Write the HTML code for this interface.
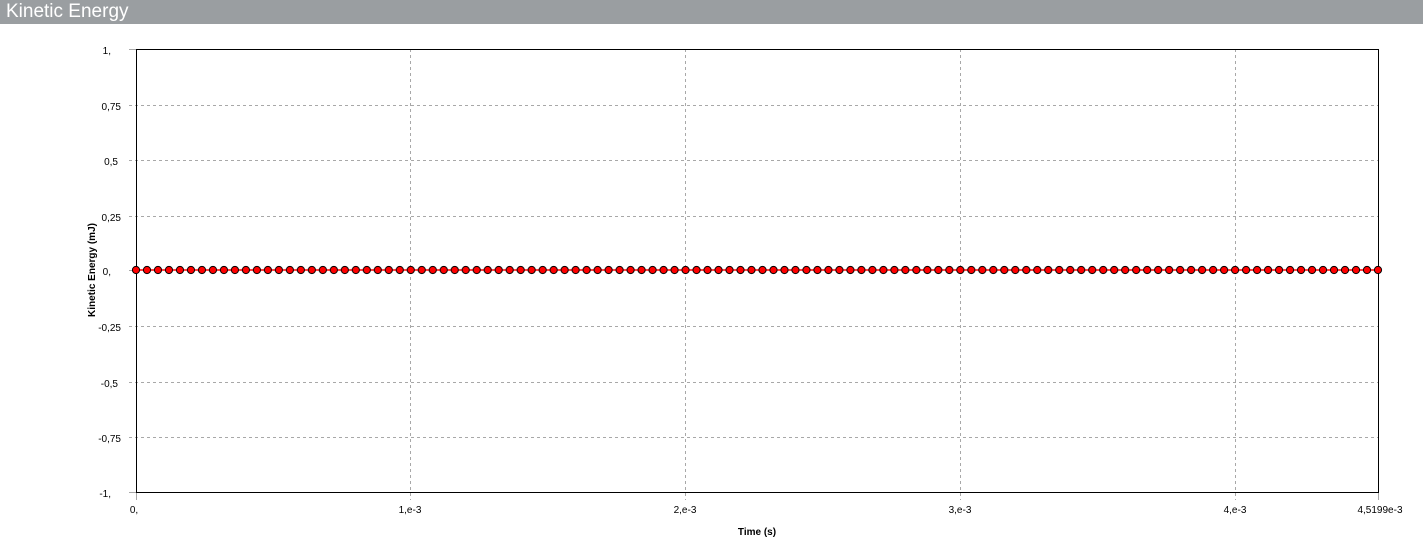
<!DOCTYPE html>
<html><head><meta charset="utf-8"><style>
html,body{margin:0;padding:0;background:#fff;width:1423px;height:552px;overflow:hidden}
.hdr{position:absolute;left:0;top:0;width:1423px;height:24px;background:#9a9ea1;color:#fff;font:19px "Liberation Sans",sans-serif;line-height:24px;padding-left:6px;box-sizing:border-box}
svg{position:absolute;left:0;top:0}
text{font-family:"Liberation Sans",sans-serif;font-size:10px;fill:#000}
</style></head><body>
<div class="hdr">Kinetic Energy</div>
<svg width="1423" height="552" xmlns="http://www.w3.org/2000/svg">
<defs>
<pattern id="mk" x="130.5" y="264" width="10.991" height="12" patternUnits="userSpaceOnUse">
<circle cx="5.5" cy="6" r="3.6" fill="#f00" stroke="#000" stroke-width="1"/>
</pattern>
</defs>
<g stroke="#a8a8a8" stroke-dasharray="3,3" stroke-width="1">
<line x1="129" y1="105.5" x2="1378" y2="105.5"/>
<line x1="129" y1="160.5" x2="1378" y2="160.5"/>
<line x1="129" y1="216.5" x2="1378" y2="216.5"/>
<line x1="129" y1="326.5" x2="1378" y2="326.5"/>
<line x1="129" y1="382.5" x2="1378" y2="382.5"/>
<line x1="129" y1="437.5" x2="1378" y2="437.5"/>
<line x1="410.5" y1="49" x2="410.5" y2="500"/>
<line x1="685.5" y1="49" x2="685.5" y2="500"/>
<line x1="960.5" y1="49" x2="960.5" y2="500"/>
<line x1="1235.5" y1="49" x2="1235.5" y2="500"/>
</g>
<g stroke="#a8a8a8" stroke-width="1">
<line x1="129" y1="49.5" x2="136" y2="49.5"/>
<line x1="129" y1="270.5" x2="136" y2="270.5"/>
<line x1="129" y1="492.5" x2="136" y2="492.5"/>
<line x1="136.5" y1="492" x2="136.5" y2="500"/>
<line x1="1378.5" y1="492" x2="1378.5" y2="500"/>
</g>
<rect x="136.5" y="49.5" width="1242" height="443" fill="none" stroke="#000" stroke-width="1"/>
<line x1="136" y1="270" x2="1378" y2="270" stroke="#f00" stroke-width="1.5"/>
<rect x="130" y="264" width="1254" height="12" fill="url(#mk)"/>
<g text-anchor="end">
<text x="111" y="54">1,</text>
<text x="121" y="110">0,75</text>
<text x="118" y="165">0,5</text>
<text x="121" y="221">0,25</text>
<text x="111" y="275">0,</text>
<text x="121" y="331">-0,25</text>
<text x="118" y="387">-0,5</text>
<text x="121" y="442">-0,75</text>
<text x="111" y="497">-1,</text>
</g>
<g text-anchor="middle">
<text x="134" y="513">0,</text>
<text x="410" y="513">1,e-3</text>
<text x="685" y="513">2,e-3</text>
<text x="960" y="513">3,e-3</text>
<text x="1235" y="513">4,e-3</text>
<text x="1380" y="513">4,5199e-3</text>
<text x="757" y="535" font-weight="bold">Time (s)</text>
</g>
<text transform="translate(95,270) rotate(-90)" text-anchor="middle" font-weight="bold">Kinetic Energy (mJ)</text>
</svg>
</body></html>
